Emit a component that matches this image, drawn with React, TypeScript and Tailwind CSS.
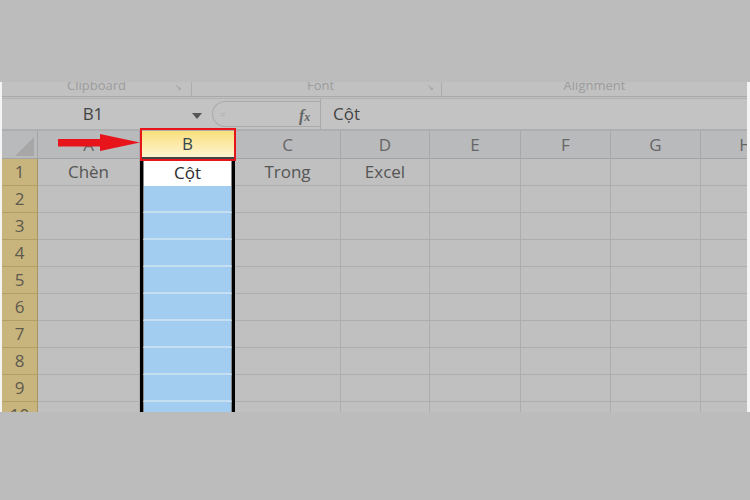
import React from "react";

const COLS = ["A", "B", "C", "D", "E", "F", "G", "H"];
const ROW_TEXT: Record<number, Record<string, string>> = {
  1: { A: "Chèn", B: "Cột", C: "Trong", D: "Excel" },
};

const gridCols = "grid grid-cols-[36px_102px_95px_106px_89px_91px_90px_90px_90px]";

function RibbonLabels() {
  return (
    <div className="relative h-[15px] border-b border-[#a9a9a9] bg-[#c1c1c1] overflow-hidden">
      <div className="flex h-full text-[13px] leading-none text-[#9c9c9c]">
        <div className="relative w-[190px] border-r border-[#adadad] flex justify-center">
          <span className="-mt-[3px]">Clipboard</span>
          <span className="absolute right-[9px] top-[1px] text-[8px]">↘</span>
        </div>
        <div className="relative w-[250px] border-r border-[#adadad] flex justify-center">
          <span className="-mt-[3px] pl-[8px]">Font</span>
          <span className="absolute right-[7px] top-[1px] text-[8px]">↘</span>
        </div>
        <div className="relative flex-1 flex justify-center">
          <span className="-mt-[3px]">Alignment</span>
        </div>
      </div>
    </div>
  );
}

function FormulaBar() {
  return (
    <div className="h-[33px] flex items-center border-b-2 border-[#aeaeae] border-t border-t-[#b2b2b2] bg-[#c3c3c3] mt-[1px]">
      <div className="relative w-[210px] h-full flex items-center">
        <span className="w-[182px] text-center text-[17px] text-[#444]">B1</span>
        <svg width="10" height="6" viewBox="0 0 10 6" className="absolute left-[190px] top-[14px]">
          <path d="M0 0 L10 0 L5 6 Z" fill="#555" />
        </svg>
      </div>
      <div className="relative h-[26px] w-[108px] rounded-l-full border border-[#aaaaaa] border-r-0 flex items-center">
        <span className="ml-[7px] text-[#a9a9a9] text-[10px] leading-none">=</span>
        <span className="absolute left-[86px] top-[2px] italic font-bold text-[16px] text-[#666]" style={{ fontFamily: '"Liberation Serif", serif' }}>
          f<span className="text-[12px]">x</span>
        </span>
      </div>
      <div className="h-full w-[1px] bg-[#a9a9a9]" />
      <div className="flex-1 h-full flex items-center pl-[12px] text-[17px] text-[#444]">Cột</div>
    </div>
  );
}

function HeaderRow() {
  return (
    <div className={`${gridCols} h-[28px] bg-[#b9babc] border-b border-[#a2a2a2]`}>
      <div className="relative border-r border-[#a5a5a5]">
        <svg width="19" height="19" viewBox="0 0 19 19" className="absolute right-[3px] bottom-[3px]">
          <path d="M19 0 L19 19 L0 19 Z" fill="#a7a7a7" />
        </svg>
      </div>
      {COLS.map((c) => (
        <div
          key={c}
          className={
            c === "B"
              ? "flex items-center justify-center text-[17px] text-[#36474c] bg-gradient-to-b from-[#f9df7a] to-[#fff4cf] border-b-2 border-[#444]"
              : "flex items-center justify-center text-[17px] text-[#666] border-r border-[#a8a8a8]"
          }
        >
          {c}
        </div>
      ))}
    </div>
  );
}

function Row({ n }: { n: number }) {
  const text = ROW_TEXT[n] || {};
  return (
    <div className={`${gridCols} h-[27px]`}>
      <div className="flex items-center justify-center bg-[#c8b47d] border-b border-[#b39f66] border-r border-r-[#a8955f] text-[17px] text-[#5e5a4e]">
        {n}
      </div>
      {COLS.map((c) => {
        if (c === "B") {
          return (
            <div key={c} className="border-x-[3px] border-black">
              <div
                className={
                  n === 1
                    ? "h-full bg-white border-x border-[#888] flex items-center justify-center text-[17px] text-[#2c2c2c]"
                    : "h-full bg-[#a3cdf0] border-x border-[#888] border-b-2 border-b-[#c5def2]"
                }
              >
                {text[c]}
              </div>
            </div>
          );
        }
        return (
          <div
            key={c}
            className="flex items-center justify-center border-r border-b border-[#adadad] bg-[#c0c0c0] text-[17px] text-[#555]"
          >
            {text[c]}
          </div>
        );
      })}
    </div>
  );
}

export default function App() {
  return (
    <div
      className="w-[750px] h-[500px] bg-[#bcbcbc] pt-[82px] overflow-hidden"
      style={{ fontFamily: '"Open Sans", "Liberation Sans", sans-serif' }}
    >
      <div className="relative h-[330px] w-[750px] bg-[#c0c0c0] border-l-2 border-r-[3px] border-[#f4f4f4] overflow-hidden">
        <RibbonLabels />
        <FormulaBar />
        <HeaderRow />
        {[1, 2, 3, 4, 5, 6, 7, 8, 9, 10].map((n) => (
          <Row key={n} n={n} />
        ))}

        {/* red highlight around column B header */}
        <div className="absolute left-[138px] top-[46px] w-[96px] h-[33px] border-2 border-[#e8141b]" />

        {/* red arrow pointing at column B */}
        <svg width="84" height="18" viewBox="0 0 84 18" className="absolute left-[56px] top-[52px]">
          <path d="M0 5 L42 5 L42 0 L82 8.5 L42 17 L42 12.5 L0 12.5 Z" fill="#e8141b" />
        </svg>
      </div>
    </div>
  );
}
